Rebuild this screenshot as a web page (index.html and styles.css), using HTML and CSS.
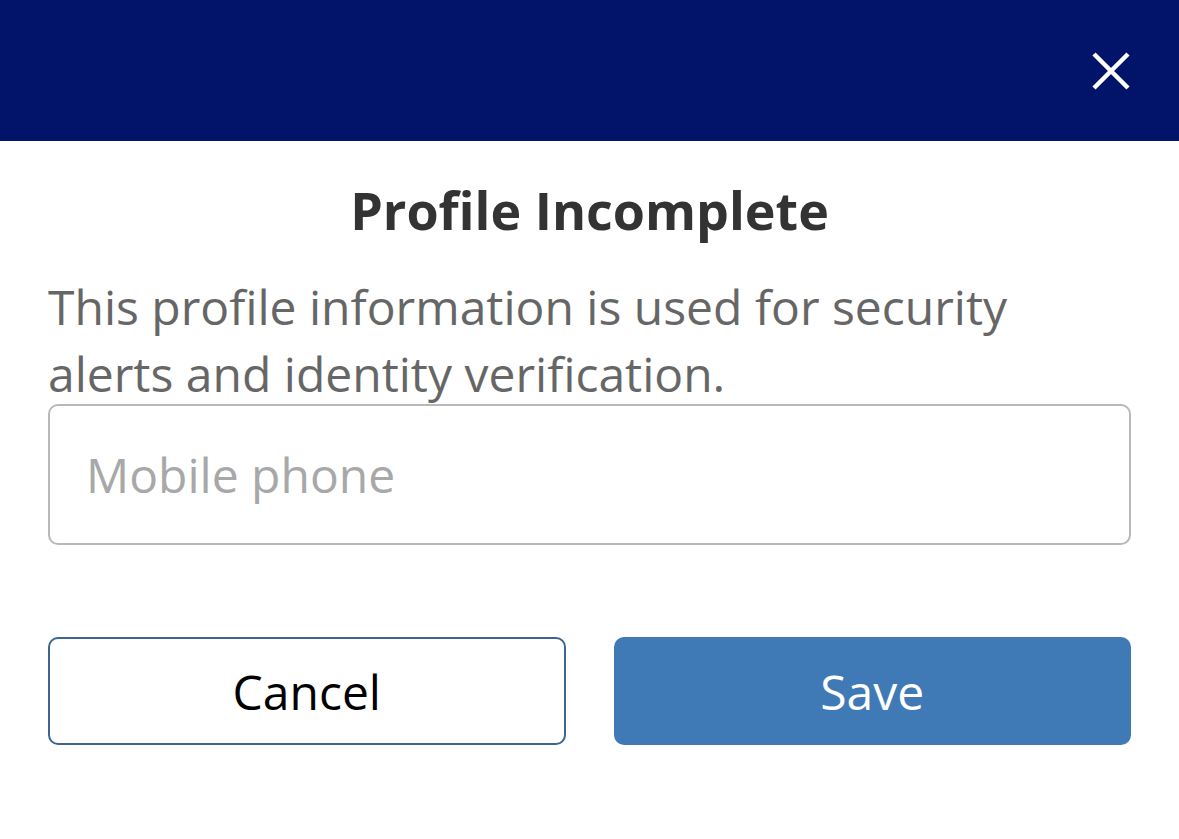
FILE: index.html
```html
<!DOCTYPE html>
<html lang="en">
<head>
<meta charset="utf-8">
<title>Profile Incomplete</title>
<link rel="stylesheet" href="styles.css">
</head>
<body>
<header class="topbar">
  <button class="close" aria-label="Close">
    <svg viewBox="0 0 40 40" width="40" height="40" aria-hidden="true">
      <path d="M3 3 L37 37 M37 3 L3 37" stroke="#ffffff" stroke-width="4.5" stroke-linecap="butt" fill="none"/>
    </svg>
  </button>
</header>
<main class="content">
  <h1 class="title">Profile Incomplete</h1>
  <p class="desc">This profile information is used for security alerts and identity verification.</p>
  <input class="field" type="tel" placeholder="Mobile phone">
  <div class="actions">
    <button class="btn btn-cancel">Cancel</button>
    <button class="btn btn-save">Save</button>
  </div>
</main>
</body>
</html>
```
FILE: styles.css
```css
* { box-sizing: border-box; }
html, body { margin: 0; padding: 0; background: #ffffff; }
body { font-family: "Open Sans", "Noto Sans", sans-serif; }

.topbar {
  height: 141px;
  background: #02136a;
  display: flex;
  align-items: center;
  justify-content: flex-end;
  padding: 0 48px;
}
.close {
  background: none;
  border: 0;
  padding: 0;
  width: 40px;
  height: 40px;
  display: flex;
  cursor: pointer;
}

.content {
  padding: 0 48px;
}
.title {
  margin: 37px 0 0;
  font-size: 52px;
  line-height: 64px;
  font-weight: 700;
  color: #333333;
  text-align: center;
}
.desc {
  margin: 31px 0 0;
  font-size: 48px;
  line-height: 67px;
  color: #666666;
}
.field {
  display: block;
  width: 100%;
  height: 141px;
  margin-top: -3px;
  border: 2px solid #b8b8b8;
  border-radius: 10px;
  padding: 0 36px;
  font-family: inherit;
  font-size: 48px;
  color: #333333;
  background: #ffffff;
  outline: none;
}
.field::placeholder { color: #a8a8a8; }

.actions {
  display: grid;
  grid-template-columns: 1fr 1fr;
  gap: 48px;
  margin-top: 92px;
}
.btn {
  height: 108px;
  border-radius: 10px;
  font-family: inherit;
  font-size: 48px;
  cursor: pointer;
}
.btn-cancel {
  background: #ffffff;
  border: 2px solid #3c6690;
  color: #000000;
}
.btn-save {
  background: #3f7ab7;
  border: 0;
  color: #ffffff;
}
```
